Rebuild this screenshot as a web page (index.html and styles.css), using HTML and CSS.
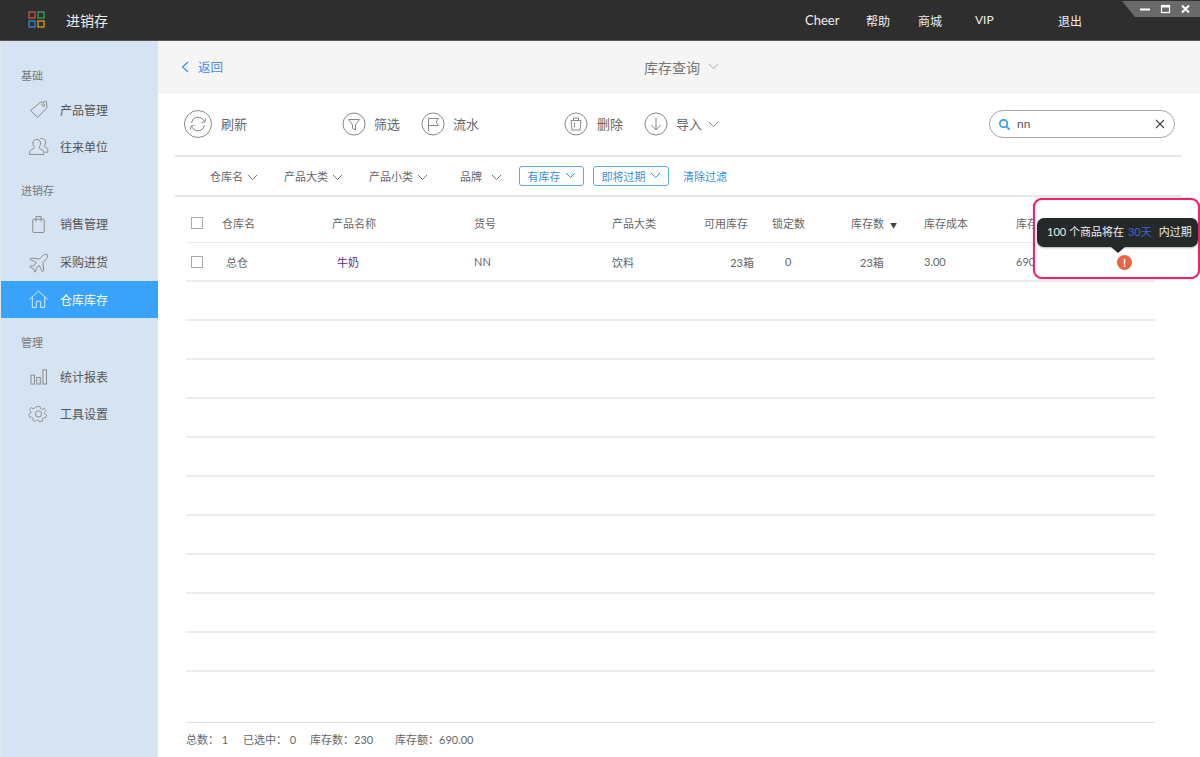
FILE: index.html
```html
<!DOCTYPE html>
<html>
<head>
    <title>进销存</title>
    <link rel="stylesheet" href="styles.css">
</head>
<body>
    <div class="topbar">
        <svg class="logo" width="18" height="18" viewBox="0 0 18 18" fill="none" stroke-width="1.4">
            <rect x="1" y="1" width="6" height="6" stroke="#c8503f"/>
            <rect x="10" y="1" width="6" height="6" stroke="#2f9e57"/>
            <rect x="1" y="10" width="6" height="6" stroke="#2f86c9"/>
            <rect x="10" y="10" width="6" height="6" stroke="#d98d1e"/>
        </svg>
        <div class="app-name">进销存</div>
        <div class="topnav">
            <span class="nav-cheer">Cheer</span>
            <span class="nav-help">帮助</span>
            <span class="nav-shop">商城</span>
            <span class="nav-vip">VIP</span>
            <span class="nav-exit">退出</span>
        </div>
        <div class="winctl">
            <svg width="78" height="16" viewBox="0 0 78 16" fill="none" stroke="#fff">
                <path d="M18 8.5h10" stroke-width="2"/>
                <rect x="39.5" y="4.5" width="8" height="7" stroke-width="1.2"/>
                <path d="M39.5 5.5h8" stroke-width="2"/>
                <path d="M60 4.5l7 7M67 4.5l-7 7" stroke-width="2"/>
            </svg>
        </div>
    </div>

    <div class="layout">
        <div class="sidebar">
            <div class="group-label">基础</div>
            <div class="side-item">
                <svg width="23" height="23" viewBox="0 0 26 26" fill="none" stroke="#8a8a8a" stroke-width="1.1"><path d="M4 14L15 5l7-1 .5 7L12 22z"/><circle cx="18.500" cy="8" r="1.500"/></svg>
                <span>产品管理</span>
            </div>
            <div class="side-item">
                <svg width="23" height="23" viewBox="0 0 26 26" fill="none" stroke="#8a8a8a" stroke-width="1.1"><path d="M3 22v-3c0-2 4-3 5-4 .5-1 0-2-.5-2.500C6 10 6.500 5 11 5s5 5 3.500 7.500c-.5.500-1 1.500-.5 2.500 1 1 5 2 5 4v3z"/><path d="M15 4c4-1 6.500 2 6 5-.2 1.500-1 2.500-1.500 3.500 0 1 3.500 2 4 4v3h-3"/></svg>
                <span>往来单位</span>
            </div>

            <div class="group-label group-sales">进销存</div>
            <div class="side-item tall">
                <svg width="23" height="23" viewBox="0 0 26 26" fill="none" stroke="#8a8a8a" stroke-width="1.1"><rect x="6.500" y="7" width="13" height="15" rx="1"/><path d="M10 10V4h6v6"/></svg>
                <span>销售管理</span>
            </div>
            <div class="side-item tall">
                <svg width="23" height="23" viewBox="0 0 26 26" fill="none" stroke="#8a8a8a" stroke-width="1.1"><path d="M23 4c-2-1-4 0-6 2l-3 3-9-1-1.500 1.500 7 3.500-3 4-3-.5L3 18l4 2 2 4 1.500-1.500-.5-3 4-3 3.500 7 1.500-1.500-1-9 3-3c2-2 3-4 2-6z"/></svg>
                <span>采购进货</span>
            </div>
            <div class="side-item active">
                <svg width="23" height="23" viewBox="0 0 26 26" fill="none" stroke="#d8ecff" stroke-width="1.1"><path d="M2.500 13L13 3.500 23.500 13"/><path d="M6 10.500V22h4.500v-7h5v7H20V10.500"/></svg>
                <span>仓库库存</span>
            </div>

            <div class="group-label group-manage">管理</div>
            <div class="side-item">
                <svg width="23" height="23" viewBox="0 0 26 26" fill="none" stroke="#8a8a8a" stroke-width="1.1"><rect x="4.500" y="11.500" width="4" height="10"/><rect x="11" y="14" width="4" height="7.500"/><rect x="18" y="5.500" width="4" height="16"/></svg>
                <span>统计报表</span>
            </div>
            <div class="side-item">
                <svg width="23" height="23" viewBox="0 0 26 26" fill="none" stroke="#8a8a8a" stroke-width="1.1"><circle cx="13" cy="13.500" r="3.500"/><path d="M11 4h4l.7 2.800 2.200 1 2.500-1.500 2.300 3-2 2 .3 2.200 2.500 1.500-1.200 3.600-2.800-.3-1.600 1.700.3 2.800-3.500 1-1.500-2.300h-2.400L9.300 23l-3.500-1 .3-2.800-1.600-1.700-2.800.3L.5 14l2.500-1.500.3-2.200-2-2 2.300-3 2.500 1.500 2.200-1z" transform="translate(1.500 1.600) scale(.88)"/></svg>
                <span>工具设置</span>
            </div>
        </div>

        <div class="main">
            <div class="subheader">
                <div class="back">
                    <svg width="8" height="12" viewBox="0 0 8 12" fill="none" stroke="#3f8cf0" stroke-width="1.2"><path d="M7 1L1.500 6 7 11"/></svg>
                    <span>返回</span>
                </div>
                <div class="page-title">
                    <span>库存查询</span>
                    <svg width="11" height="7" viewBox="0 0 11 7" fill="none" stroke="#c4c4c4" stroke-width="1.1"><path d="M1 1l4.500 4.500L10 1"/></svg>
                </div>
            </div>

            <div class="toolbar">
                <div class="tool tool-refresh">
                    <svg width="30" height="30" viewBox="0 0 30 30" fill="none" stroke="#888" stroke-width="1"><circle cx="15" cy="15" r="13.500"/><path d="M8.500 14a6.500 6.500 0 0 1 11.500-3.500l1.500 2M21.500 16A6.500 6.500 0 0 1 10 19.500l-1.500-2"/><path d="M18.500 13.500l3.500-.500.5-3.500M11.500 16.500l-3.500.500-.5 3.500"/></svg>
                    <span>刷新</span>
                </div>
                <div class="tool tool-filter">
                    <svg width="24" height="24" viewBox="0 0 24 24" fill="none" stroke="#888" stroke-width="1"><circle cx="12" cy="12" r="11"/><path d="M6.500 7.500h11l-4 5.500v5l-3-1.500V13z"/></svg>
                    <span>筛选</span>
                </div>
                <div class="tool tool-flow">
                    <svg width="24" height="24" viewBox="0 0 24 24" fill="none" stroke="#888" stroke-width="1"><circle cx="12" cy="12" r="11"/><path d="M7.500 19V6.500h10l-2.500 3.500 2.500 3.500H7.500"/></svg>
                    <span>流水</span>
                </div>
                <div class="tool tool-delete">
                    <svg width="24" height="24" viewBox="0 0 24 24" fill="none" stroke="#888" stroke-width="1"><circle cx="12" cy="12" r="11"/><path d="M7 8.500h10l-1 9.500H8zM9.500 8.500V6h5v2.500M10.500 11v4.500"/></svg>
                    <span>删除</span>
                </div>
                <div class="tool tool-import">
                    <svg width="24" height="24" viewBox="0 0 24 24" fill="none" stroke="#888" stroke-width="1"><circle cx="12" cy="12" r="11"/><path d="M12 5.500v12M7.500 13l4.500 5 4.500-5"/></svg>
                    <span>导入</span>
                    <svg class="chev" width="11" height="7" viewBox="0 0 11 7" fill="none" stroke="#888" stroke-width="1"><path d="M1 1l4.500 4.500L10 1"/></svg>
                </div>
                <div class="search">
                    <svg width="13" height="13" viewBox="0 0 14 14" fill="none" stroke="#2f9cf0" stroke-width="1.800"><circle cx="6" cy="6" r="4"/><path d="M9 9l3.500 3.500"/></svg>
                    <span class="search-text">nn</span>
                    <svg width="10" height="10" viewBox="0 0 10 10" fill="none" stroke="#444" stroke-width="1.200"><path d="M1 1l8 8M9 1l-8 8"/></svg>
                </div>
            </div>

            <div class="filters">
                <span class="filter f-store">仓库名<svg width="11" height="7" viewBox="0 0 11 7" fill="none" stroke="#777" stroke-width="1"><path d="M1 1l4.500 4.500L10 1"/></svg></span>
                <span class="filter f-big">产品大类<svg width="11" height="7" viewBox="0 0 11 7" fill="none" stroke="#777" stroke-width="1"><path d="M1 1l4.500 4.500L10 1"/></svg></span>
                <span class="filter f-small">产品小类<svg width="11" height="7" viewBox="0 0 11 7" fill="none" stroke="#777" stroke-width="1"><path d="M1 1l4.500 4.500L10 1"/></svg></span>
                <span class="filter f-brand">品牌<svg width="11" height="7" viewBox="0 0 11 7" fill="none" stroke="#777" stroke-width="1"><path d="M1 1l4.500 4.500L10 1"/></svg></span>
                <span class="chip chip-stock">有库存<svg width="11" height="7" viewBox="0 0 11 7" fill="none" stroke="#2f8fe0" stroke-width="1"><path d="M1 1l4.500 4.500L10 1"/></svg></span>
                <span class="chip chip-expire">即将过期<svg width="11" height="7" viewBox="0 0 11 7" fill="none" stroke="#2f8fe0" stroke-width="1"><path d="M1 1l4.500 4.500L10 1"/></svg></span>
                <span class="clear">清除过滤</span>
            </div>

            <div class="table">
                <div class="row head">
                    <span><i class="check"></i></span>
                    <span>仓库名</span>
                    <span>产品名称</span>
                    <span>货号</span>
                    <span>产品大类</span>
                    <span>可用库存</span>
                    <span>锁定数</span>
                    <span>库存数<b class="sort">▼</b></span>
                    <span>库存成本</span>
                    <span>库存额</span>
                </div>
                <div class="row body">
                    <span><i class="check"></i></span>
                    <span class="c-store">总仓</span>
                    <span class="c-name">牛奶</span>
                    <span>NN</span>
                    <span>饮料</span>
                    <span class="c-avail">23箱</span>
                    <span class="c-lock">0</span>
                    <span class="c-qty">23箱</span>
                    <span>3.00</span>
                    <span>690.00</span>
                </div>
                <div class="row"></div>
                <div class="row"></div>
                <div class="row"></div>
                <div class="row"></div>
                <div class="row"></div>
                <div class="row"></div>
                <div class="row"></div>
                <div class="row"></div>
                <div class="row"></div>
                <div class="row"></div>
            </div>

            <div class="summary">
                <span class="s-total">总数：&nbsp;1</span>
                <span class="s-picked">已选中：&nbsp;0</span>
                <span class="s-qty">库存数：230</span>
                <span>库存额：690.00</span>
            </div>
        </div>
    </div>

    <div class="mark"></div>
    <div class="tip">100 个商品将在<em>30天</em>内过期</div>
    <div class="warn">!</div>
</body>
</html>
```

FILE: styles.css
```css
body {
    margin: 0;
    height: 757px;
    overflow: hidden;
    background-color: #fff;
    font-family: Lato, "Noto Sans CJK SC", sans-serif;
    color: #555;
    font-size: 11px;
}

/* top bar */
.topbar {
    position: relative;
    display: flex;
    align-items: center;
    height: 40px;
    background-color: #2e2e2e;
    border-bottom: 1px solid #555;
    color: #eee;
}

.logo {
    margin-left: 28px;
}

.app-name {
    margin-left: 20px;
    font-size: 14px;
}

.topnav {
    display: flex;
    margin-left: 697px;
    font-size: 12px;
}

.nav-cheer {
    width: 61px;
    font-size: 13px;
}

.nav-help {
    width: 52px;
}

.nav-shop {
    width: 57px;
}

.nav-vip {
    width: 83px;
}

.winctl {
    position: absolute;
    top: 1px;
    right: 0;
    width: 78px;
    height: 16px;
    background-color: #6a6a6a;
    clip-path: polygon(0 0, 100% 0, 100% 100%, 13px 100%);
}

.winctl svg {
    display: block;
}

/* sidebar */
.layout {
    display: flex;
    height: 716px;
}

.sidebar {
    box-sizing: border-box;
    width: 158px;
    padding-top: 25px;
    background-color: #d6e3f3;
    border-left: 1px solid #e2e6ea;
}

.group-label {
    height: 20px;
    line-height: 20px;
    margin-bottom: 5px;
    padding-left: 20px;
    font-size: 11px;
    color: #777;
}

.group-sales {
    margin-top: 16px;
    margin-bottom: 4px;
}

.group-manage {
    margin-top: 15px;
}

.side-item {
    display: flex;
    align-items: center;
    height: 37px;
    padding-left: 26px;
    font-size: 12px;
    color: #555;
}

.side-item.tall {
    height: 38px;
}

.side-item span {
    margin-left: 10px;
}

.side-item.tall span {
    padding-bottom: 2px;
}

.side-item.active {
    background-color: #39a3fb;
    color: #fff;
}

.side-item.active span {
    padding-bottom: 1px;
}

/* main */
.main {
    flex: 1;
    display: flex;
    flex-direction: column;
}

.subheader {
    position: relative;
    display: flex;
    align-items: center;
    justify-content: center;
    box-sizing: border-box;
    height: 52px;
    padding-top: 1px;
    background-color: #f5f5f5;
    border-bottom: 1px solid #ececec;
}

.back {
    position: absolute;
    left: 23px;
    display: flex;
    align-items: center;
    font-size: 12.500px;
    color: #3f8cf0;
}

.back span {
    margin-left: 9px;
}

.page-title {
    display: flex;
    align-items: center;
    padding-left: 5px;
    font-size: 14px;
    color: #777;
}

.page-title svg {
    margin-left: 8px;
}

.toolbar {
    display: flex;
    align-items: center;
    height: 63px;
    margin-left: 17px;
    width: 1007px;
    border-bottom: 2px solid #e8e8e8;
}

.tool {
    display: flex;
    align-items: center;
    font-size: 13px;
    color: #666;
}

.tool span {
    margin-left: 8px;
    padding-bottom: 2px;
}

.tool-refresh {
    margin-left: 8px;
}

.tool-filter {
    margin-left: 95px;
}

.tool-flow {
    margin-left: 21px;
}

.tool-delete {
    margin-left: 85px;
}

.tool-delete span {
    margin-left: 9px;
}

.tool-import {
    margin-left: 21px;
}

.chev {
    margin-left: 6px;
}

.search {
    display: flex;
    align-items: center;
    box-sizing: border-box;
    width: 186px;
    height: 28px;
    margin-left: auto;
    margin-right: 7px;
    padding: 0 9px 0 8px;
    border: 1px solid #a8a8a8;
    border-radius: 14px;
}

.search-text {
    flex: 1;
    margin-left: 6px;
    padding-bottom: 1px;
    font-size: 12px;
    color: #555;
}

.filters {
    display: flex;
    align-items: center;
    height: 37px;
    margin-left: 17px;
    width: 1007px;
    padding-bottom: 1px;
    border-bottom: 2px solid #e8e8e8;
    color: #666;
}

.filter svg {
    margin-left: 4px;
}

.f-store {
    margin-left: 35px;
}

.f-big {
    margin-left: 26px;
}

.f-small {
    margin-left: 26px;
}

.f-brand {
    margin-left: 32px;
}

.f-brand svg {
    margin-left: 9px;
}

.chip {
    display: flex;
    align-items: center;
    justify-content: center;
    box-sizing: border-box;
    height: 20px;
    border: 1px solid #5aa9e8;
    border-radius: 3px;
    color: #3d8fd8;
}

.chip svg {
    margin-left: 4px;
}

.chip-stock {
    width: 65px;
    margin-left: 17px;
}

.chip-expire {
    width: 76px;
    margin-left: 9px;
}

.clear {
    margin-left: 14px;
    color: #2f8fe0;
}

/* table */
.table {
    margin-left: 28px;
    width: 969px;
}

.row {
    box-sizing: border-box;
    display: grid;
    grid-template-columns: 36px 110px 142px 138px 92px 68px 79px 73px 92px 1fr;
    align-items: center;
    height: 39px;
    border-bottom: 2px solid #ececec;
    color: #666;
}

.row.head {
    height: 46px;
    padding-top: 7px;
    border-bottom-width: 1px;
}

.check {
    display: block;
    box-sizing: border-box;
    width: 12px;
    height: 12px;
    margin-left: 5px;
    border: 1px solid #aaa;
}

.sort {
    margin-left: 6px;
    font-size: 7px;
    font-weight: normal;
    color: #444;
}

.c-store {
    padding-left: 4px;
}

.c-name {
    padding-left: 5px;
    color: #5b2a7e;
}

.c-avail {
    padding-right: 18px;
    text-align: right;
}

.c-lock {
    padding-left: 13px;
}

.c-qty {
    padding-left: 9px;
}

.summary {
    display: flex;
    align-items: center;
    box-sizing: border-box;
    height: 35px;
    margin: 50px 0 0 28px;
    padding-bottom: 3px;
    width: 969px;
    border-top: 1px solid #e0e0e0;
    color: #666;
}

.s-total {
    width: 57px;
}

.s-picked {
    width: 67px;
}

.s-qty {
    width: 85px;
}

/* callout over the last columns */
.mark {
    position: absolute;
    left: 1033px;
    top: 198px;
    box-sizing: border-box;
    width: 167px;
    height: 81px;
    background-color: #fff;
    border: 2px solid #f5216c;
    border-radius: 9px;
    box-shadow: 0 0 1px #f5216c;
}

.tip {
    position: absolute;
    left: 1037px;
    top: 218px;
    width: 161px;
    height: 29px;
    line-height: 28px;
    padding-left: 10px;
    box-sizing: border-box;
    border-radius: 7px;
    background-color: #26292a;
    box-shadow: 0 1px 2px rgba(0, 0, 0, 0.3);
    color: #eee;
    font-size: 11px;
    white-space: nowrap;
}

.tip em {
    margin: 0 7px 0 4px;
    font-style: normal;
    color: #3a66d8;
}

.tip:after {
    content: "";
    position: absolute;
    left: 74px;
    top: 29px;
    border-style: solid;
    border-width: 6px 7px 0 7px;
    border-color: #26292a transparent transparent transparent;
}

.warn {
    position: absolute;
    left: 1117px;
    top: 255px;
    width: 15px;
    height: 15px;
    line-height: 15px;
    border-radius: 50%;
    background-color: #e9654a;
    color: #fff;
    font-size: 11px;
    font-weight: bold;
    text-align: center;
}
```
